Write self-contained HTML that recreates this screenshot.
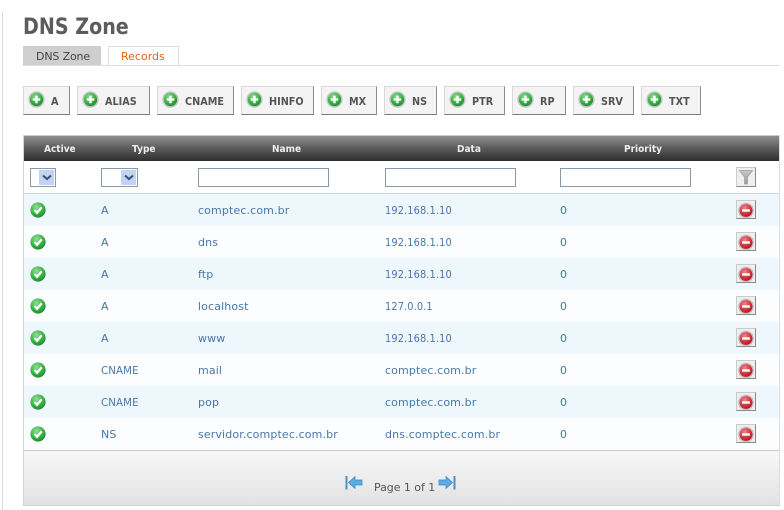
<!DOCTYPE html>
<html><head><meta charset="utf-8">
<style>
html,body{margin:0;padding:0;background:#fff;width:784px;height:510px;overflow:hidden;font-family:"DejaVu Sans","Liberation Sans",sans-serif}
.a{position:absolute;white-space:nowrap}
#wrap{position:relative;width:784px;height:510px;overflow:hidden}
.btn{position:absolute;top:86px;height:27px;background:#f4f4f4;border:1px solid #d8d8d8;border-right:1px solid #8a8a8a;border-bottom:1px solid #7a7a7a;box-sizing:content-box}
.btn svg{position:absolute;left:4px;top:4px}
.btn span{position:absolute;top:8px;font-size:11px;font-weight:bold;color:#555;white-space:nowrap;transform:scaleX(.88);transform-origin:left}
.row{position:absolute;left:24px;width:755px;height:32px}
.t{position:absolute;font-size:11px;color:#4b77a6;white-space:nowrap;letter-spacing:.13px}
.ip{transform:scaleX(.89);transform-origin:left}
.ty{transform:scaleX(.93);transform-origin:left}
.th{position:absolute;top:144px;font-size:10px;font-weight:bold;color:#eee;white-space:nowrap;transform:scaleX(.9);transform-origin:left}
.inp{position:absolute;top:168px;width:129px;height:17px;border:1px solid #8799ab;background:#fff}
.del{position:absolute;left:736px;width:18px;height:17px;background:#eee;border:1px solid #ccc;border-right-color:#888;border-bottom-color:#888}
.del svg{position:absolute;left:0;top:1px}
</style></head><body>
<div id="wrap">
<svg width="0" height="0" style="position:absolute">
<defs>
<radialGradient id="gp" cx=".4" cy=".3" r=".8"><stop offset="0" stop-color="#8fe08f"/><stop offset=".6" stop-color="#35ad42"/><stop offset="1" stop-color="#17802c"/></radialGradient>
<radialGradient id="gr" cx=".4" cy=".3" r=".8"><stop offset="0" stop-color="#f0808a"/><stop offset=".6" stop-color="#cf2f3c"/><stop offset="1" stop-color="#9c1824"/></radialGradient>
<linearGradient id="gf" x1="0" y1="0" x2="0" y2="1"><stop offset="0" stop-color="#c8c8c8"/><stop offset="1" stop-color="#9a9a9a"/></linearGradient>
<symbol id="plus" viewBox="0 0 16 16"><circle cx="8" cy="8" r="7.6" fill="#b9c4b9"/><circle cx="8" cy="8" r="6.2" fill="url(#gp)"/><path d="M8 4.5v7M4.5 8h7" stroke="#fff" stroke-width="2.2"/></symbol>
<symbol id="ok" viewBox="0 0 16 16"><circle cx="8" cy="8" r="7.6" fill="url(#gp)"/><path d="M4.4 8l2.6 2.8 4.8-5.6" stroke="#fff" stroke-width="2.3" fill="none"/></symbol>
<symbol id="minus" viewBox="0 0 18 17"><circle cx="9" cy="8.5" r="7.8" fill="#c8b8b8"/><circle cx="9" cy="8.5" r="6.4" fill="url(#gr)"/><path d="M5 8.5h8" stroke="#fff" stroke-width="2.4"/></symbol>
</defs></svg>

<div class="a" style="left:2px;top:12px;width:1px;height:498px;background:#d9d9d9"></div>
<div class="a" style="left:23px;top:15px;font-size:22px;font-weight:bold;color:#5c5c5c;line-height:26px;transform:scaleX(.868);transform-origin:left">DNS Zone</div>

<div class="a" style="left:23px;top:46px;width:78px;height:19px;background:#cfcfcf"></div>
<div class="a" style="left:36px;top:50px;font-size:11px;color:#444;letter-spacing:-.15px">DNS Zone</div>
<div class="a" style="left:108px;top:46px;width:69px;height:19px;border:1px solid #ddd;border-bottom:0;background:#fff"></div>
<div class="a" style="left:121px;top:50px;font-size:11px;color:#e0661a;letter-spacing:0">Records</div>
<div class="a" style="left:23px;top:65px;width:756px;height:1px;background:#ddd"></div>

<div class="btn" style="left:23px;width:45px"><svg width="17" height="17"><use href="#plus"/></svg><span style="left:27px">A</span></div>
<div class="btn" style="left:77px;width:71px"><svg width="17" height="17"><use href="#plus"/></svg><span style="left:27px">ALIAS</span></div>
<div class="btn" style="left:157px;width:75px"><svg width="17" height="17"><use href="#plus"/></svg><span style="left:27px">CNAME</span></div>
<div class="btn" style="left:241px;width:71px"><svg width="17" height="17"><use href="#plus"/></svg><span style="left:27px">HINFO</span></div>
<div class="btn" style="left:321px;width:54px"><svg width="17" height="17"><use href="#plus"/></svg><span style="left:27px">MX</span></div>
<div class="btn" style="left:384px;width:51px"><svg width="17" height="17"><use href="#plus"/></svg><span style="left:27px">NS</span></div>
<div class="btn" style="left:444px;width:59px"><svg width="17" height="17"><use href="#plus"/></svg><span style="left:27px">PTR</span></div>
<div class="btn" style="left:512px;width:52px"><svg width="17" height="17"><use href="#plus"/></svg><span style="left:27px">RP</span></div>
<div class="btn" style="left:573px;width:59px"><svg width="17" height="17"><use href="#plus"/></svg><span style="left:27px">SRV</span></div>
<div class="btn" style="left:641px;width:58px"><svg width="17" height="17"><use href="#plus"/></svg><span style="left:27px">TXT</span></div>

<!-- table frame -->
<div class="a" style="left:23px;top:135px;width:1px;height:370px;background:#d5d5d5"></div>
<div class="a" style="left:779px;top:135px;width:1px;height:370px;background:#dcdcdc"></div>
<div class="a" style="left:24px;top:135px;width:755px;height:1px;background:#ccc"></div>
<div class="a" style="left:24px;top:136px;width:755px;height:25px;background:linear-gradient(#8e8e8e,#5a5a5a 50%,#2e2e2e)"></div>
<div class="th" style="left:44px">Active</div>
<div class="th" style="left:132px">Type</div>
<div class="th" style="left:272px">Name</div>
<div class="th" style="left:457px">Data</div>
<div class="th" style="left:624px">Priority</div>

<!-- filter -->
<div class="a" style="left:30px;top:168px;width:24px;height:17px;border:1px solid #8799ab"></div>
<div class="a" style="left:39px;top:170px;width:15px;height:15px;background:#c3d3f2"></div>
<svg class="a" style="left:42px;top:174px" width="10" height="7"><path d="M1 1.5l4 3.5 4-3.5" stroke="#3b4f80" stroke-width="2" fill="none"/></svg>
<div class="a" style="left:101px;top:168px;width:35px;height:17px;border:1px solid #8799ab"></div>
<div class="a" style="left:121px;top:170px;width:15px;height:15px;background:#c3d3f2"></div>
<svg class="a" style="left:124px;top:174px" width="10" height="7"><path d="M1 1.5l4 3.5 4-3.5" stroke="#3b4f80" stroke-width="2" fill="none"/></svg>
<div class="inp" style="left:198px"></div>
<div class="inp" style="left:385px"></div>
<div class="inp" style="left:560px"></div>
<div class="del" style="top:167px;height:18px;background:#efefef"><svg width="18" height="18" style="top:0"><path d="M2.5 2.5h13L10.5 9v7h-3V9z" fill="url(#gf)" stroke="#a0a0a0" stroke-width=".8"/></svg></div>
<div class="a" style="left:24px;top:193px;width:755px;height:1px;background:#ccd3d9"></div>

<!-- rows -->
<div class="row" style="top:194px;background:#eef7fc"></div>
<div class="row" style="top:226px;background:#fbfdfe"></div>
<div class="row" style="top:258px;background:#eef7fc"></div>
<div class="row" style="top:290px;background:#fbfdfe"></div>
<div class="row" style="top:322px;background:#eef7fc"></div>
<div class="row" style="top:354px;background:#fbfdfe"></div>
<div class="row" style="top:386px;background:#eef7fc"></div>
<div class="row" style="top:418px;background:#fbfdfe"></div>

<svg class="a" style="left:30px;top:202px" width="16" height="16"><use href="#ok"/></svg>
<div class="t" style="left:101px;top:204px">A</div><div class="t" style="left:198px;top:204px">comptec.com.br</div><div class="t ip" style="left:385px;top:204px">192.168.1.10</div><div class="t" style="left:560px;top:204px">0</div>
<div class="del" style="top:200px"><svg width="18" height="17"><use href="#minus"/></svg></div>

<svg class="a" style="left:30px;top:234px" width="16" height="16"><use href="#ok"/></svg>
<div class="t" style="left:101px;top:236px">A</div><div class="t" style="left:198px;top:236px">dns</div><div class="t ip" style="left:385px;top:236px">192.168.1.10</div><div class="t" style="left:560px;top:236px">0</div>
<div class="del" style="top:232px"><svg width="18" height="17"><use href="#minus"/></svg></div>

<svg class="a" style="left:30px;top:266px" width="16" height="16"><use href="#ok"/></svg>
<div class="t" style="left:101px;top:268px">A</div><div class="t" style="left:198px;top:268px">ftp</div><div class="t ip" style="left:385px;top:268px">192.168.1.10</div><div class="t" style="left:560px;top:268px">0</div>
<div class="del" style="top:264px"><svg width="18" height="17"><use href="#minus"/></svg></div>

<svg class="a" style="left:30px;top:298px" width="16" height="16"><use href="#ok"/></svg>
<div class="t" style="left:101px;top:300px">A</div><div class="t" style="left:198px;top:300px">localhost</div><div class="t ip" style="left:385px;top:300px">127.0.0.1</div><div class="t" style="left:560px;top:300px">0</div>
<div class="del" style="top:296px"><svg width="18" height="17"><use href="#minus"/></svg></div>

<svg class="a" style="left:30px;top:330px" width="16" height="16"><use href="#ok"/></svg>
<div class="t" style="left:101px;top:332px">A</div><div class="t" style="left:198px;top:332px">www</div><div class="t ip" style="left:385px;top:332px">192.168.1.10</div><div class="t" style="left:560px;top:332px">0</div>
<div class="del" style="top:328px"><svg width="18" height="17"><use href="#minus"/></svg></div>

<svg class="a" style="left:30px;top:362px" width="16" height="16"><use href="#ok"/></svg>
<div class="t ty" style="left:101px;top:364px">CNAME</div><div class="t" style="left:198px;top:364px">mail</div><div class="t" style="left:385px;top:364px">comptec.com.br</div><div class="t" style="left:560px;top:364px">0</div>
<div class="del" style="top:360px"><svg width="18" height="17"><use href="#minus"/></svg></div>

<svg class="a" style="left:30px;top:394px" width="16" height="16"><use href="#ok"/></svg>
<div class="t ty" style="left:101px;top:396px">CNAME</div><div class="t" style="left:198px;top:396px">pop</div><div class="t" style="left:385px;top:396px">comptec.com.br</div><div class="t" style="left:560px;top:396px">0</div>
<div class="del" style="top:392px"><svg width="18" height="17"><use href="#minus"/></svg></div>

<svg class="a" style="left:30px;top:426px" width="16" height="16"><use href="#ok"/></svg>
<div class="t" style="left:101px;top:428px">NS</div><div class="t" style="left:198px;top:428px">servidor.comptec.com.br</div><div class="t" style="left:385px;top:428px">dns.comptec.com.br</div><div class="t" style="left:560px;top:428px">0</div>
<div class="del" style="top:424px"><svg width="18" height="17"><use href="#minus"/></svg></div>

<!-- footer -->
<div class="a" style="left:24px;top:450px;width:755px;height:1px;background:#ccc"></div>
<div class="a" style="left:24px;top:451px;width:755px;height:54px;background:linear-gradient(#f8f8f8,#e2e2e2)"></div>
<div class="a" style="left:23px;top:505px;width:757px;height:1px;background:#cfcfcf"></div>
<svg class="a" style="left:345px;top:475px" width="18" height="16"><path d="M1.5 1v13.5" stroke="#4a90c8" stroke-width="2"/><path d="M3.5 7.5L10 1.5v3.5h7v5h-7v3.5z" fill="#5cabe2" stroke="#3f86c0" stroke-width=".7"/></svg>
<div class="a" style="left:374px;top:481px;font-size:11px;color:#555;letter-spacing:-.05px">Page 1 of 1</div>
<svg class="a" style="left:438px;top:475px" width="18" height="16"><path d="M16.5 1v13.5" stroke="#4a90c8" stroke-width="2"/><path d="M14.5 7.5L8 1.5v3.5H1v5h7v3.5z" fill="#5cabe2" stroke="#3f86c0" stroke-width=".7"/></svg>
</div>
</body></html>
